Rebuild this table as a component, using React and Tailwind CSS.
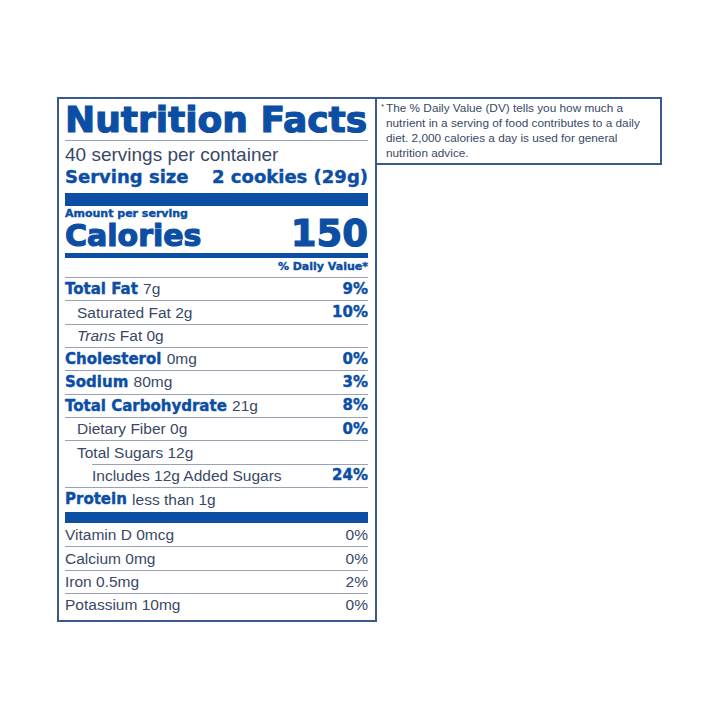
import React from 'react';

const BOLD = "font-['DejaVu_Sans',sans-serif] font-bold text-[#0c4ea4]";
const REG = "font-['Liberation_Sans',Arial,sans-serif] text-[#394866]";
const HEAVY = '[-webkit-text-stroke:1.2px_currentColor]';
const SEMI = '[-webkit-text-stroke:0.4px_currentColor]';

const nutrients = [
  { bold: 'Total Fat', amount: '7g', dv: '9%' },
  { amount: 'Saturated Fat 2g', dv: '10%', indent: 1 },
  { trans: true, indent: 1 },
  { bold: 'Cholesterol', amount: '0mg', dv: '0%' },
  { bold: 'Sodium', amount: '80mg', dv: '3%' },
  { bold: 'Total Carbohydrate', amount: '21g', dv: '8%' },
  { amount: 'Dietary Fiber 0g', dv: '0%', indent: 1 },
  { amount: 'Total Sugars 12g', indent: 1 },
  { amount: 'Includes 12g Added Sugars', dv: '24%', indent: 2 },
];

const vitamins = [
  ['Vitamin D 0mcg', '0%'],
  ['Calcium 0mg', '0%'],
  ['Iron 0.5mg', '2%'],
  ['Potassium 10mg', '0%'],
];

function NutrientRow({ row }) {
  return (
    <div className={`h-[23.33px] ${row.indent === 2 ? 'pl-[27px]' : ''}`}>
      <div className="h-full border-t border-[#97a2b5] flex items-center justify-between">
        <div className={`text-[15.5px] leading-none ${row.indent === 1 ? 'pl-[12px]' : ''}`}>
          {row.bold && <span className={`${BOLD} ${SEMI} text-[15px]`}>{row.bold} </span>}
          {row.trans ? (
            <span className={REG}>
              <i>Trans</i> Fat 0g
            </span>
          ) : (
            <span className={REG}>{row.amount}</span>
          )}
        </div>
        {row.dv && <span className={`${BOLD} ${SEMI} text-[15px] leading-none`}>{row.dv}</span>}
      </div>
    </div>
  );
}

export default function App() {
  return (
    <div className="min-h-[720px] bg-white pt-[97px] pl-[57px] flex items-start">
      {/* label */}
      <div className="w-[320px] border-2 border-[#3a5a8e] pl-[6px] pr-[7px] pb-[4px]">
        <div className={`${BOLD} ${HEAVY} text-[36px] leading-[41px] whitespace-nowrap`}>Nutrition Facts</div>
        <div className="h-px bg-[#97a2b5]" />
        <div className={`${REG} text-[19px] leading-[23px] pt-[2px] whitespace-nowrap`}>
          40 servings per container
        </div>
        <div className={`${BOLD} ${SEMI} text-[18px] leading-[22px] mb-[5px] flex justify-between whitespace-nowrap`}>
          <span>Serving size</span>
          <span>2 cookies (29g)</span>
        </div>
        <div className="h-[13px] bg-[#0c4ea4]" />
        <div className="flex justify-between items-end pt-[2px]">
          <div>
            <div className={`${BOLD} ${SEMI} text-[11px] leading-[12px]`}>Amount per serving</div>
            <div className={`${BOLD} ${HEAVY} text-[30px] leading-[31px]`}>Calories</div>
          </div>
          <div className={`${BOLD} ${HEAVY} text-[37px] leading-[35px]`}>150</div>
        </div>
        <div className="h-[5px] bg-[#0c4ea4] mt-[2px]" />
        <div className={`${BOLD} ${SEMI} text-[11px] leading-[14px] h-[19px] pt-[2px] text-right`}>
          % Daily Value*
        </div>
        {nutrients.map((row, i) => (
          <NutrientRow key={i} row={row} />
        ))}
        <div className="h-[25px] border-t border-[#97a2b5] flex items-center text-[15.5px] leading-none">
          <span className={`${BOLD} ${SEMI} text-[15px]`}>Protein&nbsp;</span>
          <span className={REG}>less than 1g</span>
        </div>
        <div className="h-[11px] bg-[#0c4ea4]" />
        {vitamins.map(([name, dv], i) => (
          <div
            key={name}
            className={`h-[23.33px] flex items-center justify-between text-[15.5px] leading-none ${REG} ${
              i > 0 ? 'border-t border-[#97a2b5]' : ''
            }`}
          >
            <span>{name}</span>
            <span>{dv}</span>
          </div>
        ))}
      </div>

      {/* footnote */}
      <div className="w-[286px] h-[68px] border-t-2 border-r-2 border-b-2 border-[#3a5a8e] -ml-px pl-[5px] pt-[2px] flex">
        <span className={`${REG} text-[8px] leading-[12px] w-[5px] text-[#4a5a7c]`}>*</span>
        <p className={`${REG} text-[11.8px] leading-[15px] text-[#4a5a7c] whitespace-nowrap`}>
          The % Daily Value (DV) tells you how much a
          <br />
          nutrient in a serving of food contributes to a daily
          <br />
          diet. 2,000 calories a day is used for general
          <br />
          nutrition advice.
        </p>
      </div>
    </div>
  );
}
